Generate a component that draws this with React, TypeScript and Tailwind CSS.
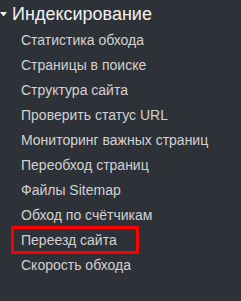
import React from 'react';

const items = [
  'Статистика обхода',
  'Страницы в поиске',
  'Структура сайта',
  'Проверить статус URL',
  'Мониторинг важных страниц',
  'Переобход страниц',
  'Файлы Sitemap',
  'Обход по счётчикам',
  'Переезд сайта',
  'Скорость обхода',
];

export default function App() {
  return (
    <div
      className="w-[241px] h-[301px] bg-[#2e3138] overflow-hidden"
      style={{ fontFamily: '"Liberation Sans", Arial, sans-serif' }}
    >
      {/* Section header */}
      <div className="flex items-center h-[28px]">
        <svg width="7" height="5" viewBox="0 0 7 5" className="ml-[0px] mt-[1px] shrink-0">
          <polygon points="0,0 7,0 3.5,4.5" fill="#f2f2f2" />
        </svg>
        <span className="ml-[5px] text-[18px] leading-[28px] text-[#f2f2f2]">Индексирование</span>
      </div>

      {/* Sub items */}
      <ul className="flex flex-col">
        {items.map((item) => (
          <li key={item} className="relative h-[25px] pl-[21px] text-[14px] leading-[25px] text-[#d2d2d2] whitespace-nowrap">
            {item}
            {item === 'Переезд сайта' && (
              <span className="absolute left-[11px] top-[-2px] w-[128px] h-[28px] border-[3px] border-[#ff0000]" />
            )}
          </li>
        ))}
      </ul>
    </div>
  );
}
